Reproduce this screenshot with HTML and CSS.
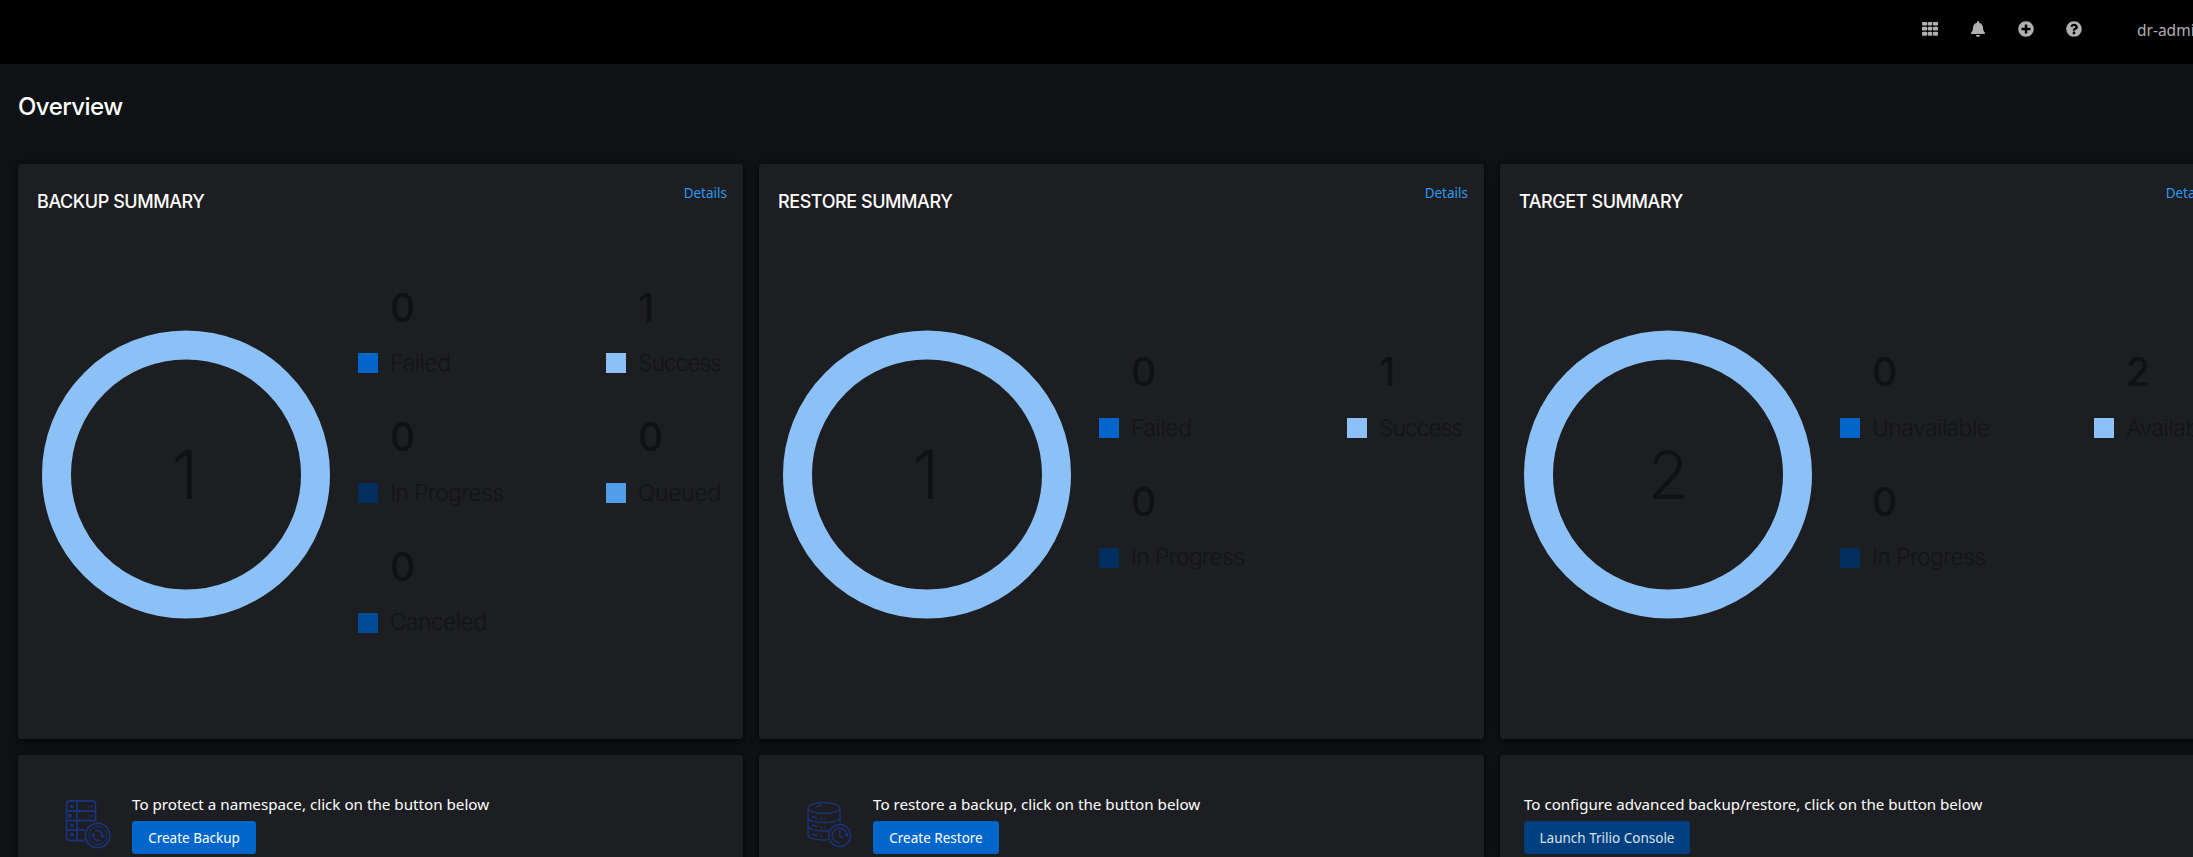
FILE: index.html
```html
<!DOCTYPE html>
<html lang="en">
<head>
<meta charset="utf-8">
<title>Overview</title>
<link rel="stylesheet" href="styles.css">
</head>
<body>
<header class="masthead">
  <svg class="tool" viewBox="0 0 16 16"><path d="M1 1h3.200a1 1 0 0 1 1 1v1.500a1 1 0 0 1-1 1H1a1 1 0 0 1-1-1V2a1 1 0 0 1 1-1zM6.800 1h2.500a1 1 0 0 1 1 1v1.500a1 1 0 0 1-1 1H6.800a1 1 0 0 1-1-1V2a1 1 0 0 1 1-1zM12 1H15a1 1 0 0 1 1 1v1.500a1 1 0 0 1-1 1h-3a1 1 0 0 1-1-1V2a1 1 0 0 1 1-1zM1 5.800h3.200a1 1 0 0 1 1 1v1.800a1 1 0 0 1-1 1H1a1 1 0 0 1-1-1V6.800a1 1 0 0 1 1-1zM6.800 5.800h2.500a1 1 0 0 1 1 1v1.800a1 1 0 0 1-1 1H6.800a1 1 0 0 1-1-1V6.800a1 1 0 0 1 1-1zM12 5.800H15a1 1 0 0 1 1 1v1.800a1 1 0 0 1-1 1h-3a1 1 0 0 1-1-1V6.800a1 1 0 0 1 1-1zM1 10.800h3.200a1 1 0 0 1 1 1v2a1 1 0 0 1-1 1H1a1 1 0 0 1-1-1v-2a1 1 0 0 1 1-1zM6.800 10.800h2.500a1 1 0 0 1 1 1v2a1 1 0 0 1-1 1H6.800a1 1 0 0 1-1-1v-2a1 1 0 0 1 1-1zM12 10.800H15a1 1 0 0 1 1 1v2a1 1 0 0 1-1 1h-3a1 1 0 0 1-1-1v-2a1 1 0 0 1 1-1z"/></svg>
  <svg class="tool" viewBox="0 0 448 512"><path d="M224 512c35.320 0 63.970-28.650 63.970-64H160.030c0 35.350 28.650 64 63.970 64zm215.390-149.710c-19.320-20.760-55.470-51.990-55.470-154.290 0-77.700-54.480-139.900-127.940-155.160V32c0-17.670-14.320-32-31.980-32s-31.980 14.330-31.980 32v20.840C118.560 68.100 64.080 130.300 64.080 208c0 102.300-36.150 133.530-55.470 154.290-6 6.450-8.660 14.160-8.610 21.710.11 16.400 12.980 32 32.100 32h383.800c19.120 0 32-15.600 32.100-32 .05-7.550-2.610-15.270-8.610-21.710z"/></svg>
  <svg class="tool" viewBox="0 0 512 512"><path d="M256 8C119 8 8 119 8 256s111 248 248 248 248-111 248-248S393 8 256 8zm144 276c0 6.600-5.400 12-12 12h-92v92c0 6.600-5.400 12-12 12h-56c-6.600 0-12-5.400-12-12v-92h-92c-6.600 0-12-5.400-12-12v-56c0-6.600 5.400-12 12-12h92v-92c0-6.600 5.400-12 12-12h56c6.600 0 12 5.400 12 12v92h92c6.600 0 12 5.400 12 12v56z"/></svg>
  <svg class="tool" viewBox="0 0 512 512"><path d="M504 256c0 136.997-111.043 248-248 248S8 392.997 8 256C8 119.083 119.043 8 256 8s248 111.083 248 248zM262.655 90c-54.497 0-89.255 22.957-116.549 63.758-3.536 5.286-2.353 12.415 2.715 16.258l34.699 26.310c5.205 3.947 12.621 3.008 16.665-2.122 17.864-22.658 30.113-35.797 57.303-35.797 20.429 0 45.698 13.148 45.698 32.958 0 14.976-12.363 22.667-32.534 33.976C247.128 238.528 216 254.941 216 296v4c0 6.627 5.373 12 12 12h56c6.627 0 12-5.373 12-12v-1.333c0-28.462 83.186-29.647 83.186-106.667 0-58.002-60.165-102-116.531-102zM256 338c-25.365 0-46 20.635-46 46 0 25.364 20.635 46 46 46s46-20.636 46-46c0-25.365-20.635-46-46-46z"/></svg>
  <span class="user">dr-admin</span>
</header>
<main>
  <h1>Overview</h1>
  <div class="cards">
    <section class="card summary">
      <div class="card-head"><h2>BACKUP SUMMARY</h2><a>Details</a></div>
      <svg class="chart" width="678" height="380" viewBox="0 0 678 380">
        <circle class="ring" cx="144" cy="204.500" r="129.500"/>
        <text class="total" x="143" y="228.500">1</text>
        <g class="legend">
          <rect x="316" y="83" width="20" height="20" fill="#06c"/><text class="num" x="348" y="52">0</text><text x="348" y="101" textLength="61">Failed</text>
          <rect x="564" y="83" width="20" height="20" fill="#8bc1f7"/><text class="num" x="596" y="52">1</text><text x="596" y="101" textLength="84">Success</text>
          <rect x="316" y="213" width="20" height="20" fill="#002f5d"/><text class="num" x="348" y="181">0</text><text x="348" y="231" textLength="114">In Progress</text>
          <rect x="564" y="213" width="20" height="20" fill="#519de9"/><text class="num" x="596" y="181">0</text><text x="596" y="231" textLength="83">Queued</text>
          <rect x="316" y="343" width="20" height="20" fill="#004b95"/><text class="num" x="348" y="311">0</text><text x="348" y="360" textLength="97">Canceled</text>
        </g>
      </svg>
    </section>
    <section class="card summary">
      <div class="card-head"><h2>RESTORE SUMMARY</h2><a>Details</a></div>
      <svg class="chart" width="678" height="380" viewBox="0 0 678 380">
        <circle class="ring" cx="144" cy="204.500" r="129.500"/>
        <text class="total" x="143" y="228.500">1</text>
        <g class="legend">
          <rect x="316" y="148" width="20" height="20" fill="#06c"/><text class="num" x="348" y="116">0</text><text x="348" y="166" textLength="61">Failed</text>
          <rect x="564" y="148" width="20" height="20" fill="#8bc1f7"/><text class="num" x="596" y="116">1</text><text x="596" y="166" textLength="84">Success</text>
          <rect x="316" y="278" width="20" height="20" fill="#002f5d"/><text class="num" x="348" y="246">0</text><text x="348" y="295" textLength="114">In Progress</text>
        </g>
      </svg>
    </section>
    <section class="card summary">
      <div class="card-head"><h2>TARGET SUMMARY</h2><a>Details</a></div>
      <svg class="chart" width="678" height="380" viewBox="0 0 678 380">
        <circle class="ring" cx="144" cy="204.500" r="129.500"/>
        <text class="total" x="144" y="228.500">2</text>
        <g class="legend">
          <rect x="316" y="148" width="20" height="20" fill="#06c"/><text class="num" x="348" y="116">0</text><text x="348" y="166" textLength="118">Unavailable</text>
          <rect x="570" y="148" width="20" height="20" fill="#8bc1f7"/><text class="num" x="602" y="116">2</text><text x="602" y="166" textLength="91">Available</text>
          <rect x="316" y="278" width="20" height="20" fill="#002f5d"/><text class="num" x="348" y="246">0</text><text x="348" y="295" textLength="114">In Progress</text>
        </g>
      </svg>
    </section>
    <section class="card action">
      <svg class="art" viewBox="0 0 46 50" width="46" height="50">
        <path class="thick" d="M20 41.500H4.500a3 3 0 0 1-3-3V5a3 3 0 0 1 3-3h23a3 3 0 0 1 3 3v17M12 2v39.500M1.500 12h29M1.500 21.500h29M1.500 31H20"/>
        <g class="dots"><circle cx="7" cy="7.500" r="1.900"/><circle cx="5" cy="17" r="1.900"/><circle cx="7" cy="26.500" r="1.900"/><circle cx="7" cy="35.500" r="1.900"/><circle cx="24" cy="7.500" r="1"/><circle cx="27" cy="7.500" r="1"/><circle cx="24" cy="17" r="1"/><circle cx="27" cy="17" r="1"/></g>
        <circle class="thick" cx="32.700" cy="36.500" r="12.200"/><circle class="thin" cx="32.700" cy="36.500" r="9"/>
        <path class="thick" d="M30 32c3.500-1.500 7 .5 7.500 4.500M35.500 41c-3.500 1.500-7-.5-7.500-4.500"/>
        <path class="dots" d="M34.500 36.200h6l-3 3zM31 36.800h-6l3-3z"/>
      </svg>
      <div class="copy"><p>To protect a namespace, click on the button below</p><button class="backup">Create Backup</button></div>
    </section>
    <section class="card action">
      <svg class="art" viewBox="0 0 46 50" width="46" height="50">
        <path class="line" d="M2 9c0-3 7-5.500 16-5.500S34 6 34 9s-7 5.500-16 5.500S2 12 2 9v27c0 3 7 5 16 5h4M34 9v14M2 18.500c0 3 7 5 16 5s13-1.500 15.500-3.500M2 27c0 3 7 5 16 5h6M10 8c1.500-1 4-1.500 6.500-1.500M6 17.500l5 1.500M14 19.500h2m2 0h1M6 26l5 1.500M14 28.500h2m2 0h1M6 35l5 1.500M14 37h2"/>
        <circle class="line" cx="33.700" cy="36.500" r="11"/><path class="line" d="M33.700 31v6l3 2.500M33.700 44a7.500 7.500 0 1 1 7.500-8m-3-1 3 2 1.500-3"/>
      </svg>
      <div class="copy"><p>To restore a backup, click on the button below</p><button class="restore">Create Restore</button></div>
    </section>
    <section class="card action">
      <div class="copy"><p class="advanced">To configure advanced backup/restore, click on the button below</p><button class="launch">Launch Trilio Console</button></div>
    </section>
  </div>
</main>
</body>
</html>
```

FILE: styles.css
```css
* { box-sizing: border-box; }
html { overflow: hidden; }
body { margin: 0; height: 857px; overflow: hidden; background: #0f1214; color: #fff; font-family: "Noto Sans", sans-serif; }
h1, h2, p { margin: 0; }
.masthead { height: 64px; background: #000; display: flex; gap: 32px; padding: 21px 0 0 1922px; color: #b0b0b0; overflow: hidden; }
.tool { width: 16px; height: 16px; flex: none; fill: #b0b0b0; }
.user { margin-left: 23px; font-size: 15.500px; line-height: 18px; white-space: nowrap; }
main { padding: 28px 0 0 18px; }
h1 { font: 500 24px/30px Inter, sans-serif; letter-spacing: -0.55px; height: 72px; }
.cards { width: 2207px; display: grid; grid-template-columns: repeat(3, 725px); grid-template-rows: 575px 102px; gap: 16px; }
.card { background: #1d1e21; border-radius: 3px; box-shadow: 0 4px 8px rgba(0, 0, 0, .5), 0 0 4px rgba(0, 0, 0, .3); }
.card-head { display: flex; justify-content: space-between; padding: 18px 16px 0 19px; height: 106px; }
h2 { font: 500 18px/40px Inter, sans-serif; letter-spacing: -0.43px; }
.card-head a { font-size: 13.500px; line-height: 23px; color: #2b9af3; }
.chart { display: block; margin-left: 24px; overflow: hidden; }
.ring { fill: none; stroke: #8bc1f7; stroke-width: 29px; }
.total { font: 300 67px Inter, sans-serif; fill: #0f1214; text-anchor: middle; }
.legend text { font: 300 23px Inter, sans-serif; fill: #131417; }
.legend .num { font: 500 39px Inter, sans-serif; fill: #0f1214; }
.action { display: flex; align-items: flex-start; padding: 38px 24px 0; border-radius: 3px 3px 0 0; }
.art { flex: none; margin: 6px 21px 0 23px; fill: none; stroke: #1b3278; }
.thick { stroke-width: 1.8px; }
.thin { stroke-width: 1px; }
.line { stroke-width: 1.4px; }
.dots { fill: #1b3278; stroke: none; }
.copy { display: flex; flex-direction: column; align-items: flex-start; }
.copy p { font-size: 15.200px; line-height: 22px; height: 28px; white-space: nowrap; }
.copy .advanced { font-size: 15.100px; }
button { height: 33px; border: 0; border-radius: 3px; padding: 0; background: #06c; color: #fff; font: 400 13.500px "Noto Sans", sans-serif; white-space: nowrap; }
.backup { width: 124px; }
.restore { width: 126px; }
.launch { width: 166px; background: #004080; color: #dce3ea; }
```
